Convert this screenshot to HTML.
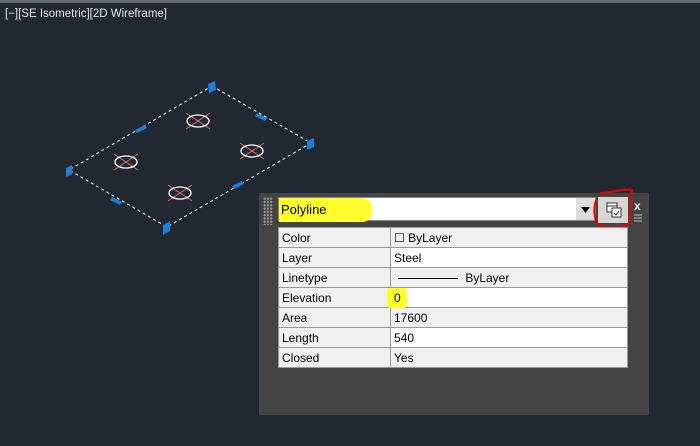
<!DOCTYPE html><html><head><style>
body{margin:0;width:700px;height:446px;background:#222831;overflow:hidden;position:relative;font-family:"Liberation Sans",sans-serif}
.t{position:absolute;left:5px;top:8px;color:#e6e6e6;font-size:11.5px}
.panel{position:absolute;left:259px;top:193px;width:390px;height:222px;background:#444}
.grip{position:absolute;left:263px;top:197px;width:10px;height:28px;background:radial-gradient(circle,#999 1px,transparent 1.3px) 0 0/3.3px 3.3px}
.dd{position:absolute;left:278px;top:197px;width:318px;height:24px;background:#fff;border:1px solid #888;box-sizing:border-box}
.hl{position:absolute;left:279px;top:198px;width:93px;height:24px;background:#ffff2a;border-radius:0 10px 10px 0}
.dd span{position:absolute;left:3px;top:5px;font-size:13px}
.arr{position:absolute;left:576px;top:198px;width:19px;height:22px;background:#ddd}
.btn{position:absolute;left:598px;top:197px;width:30px;height:26px;background:#d8d6d2}
table{position:absolute;left:278px;top:227px;width:350px;border-collapse:collapse;background:#fff;font-size:12px}
tr{height:20px}
td{border:1px solid #999;padding:0 0 0 3px}
td:first-child{width:108px;background:#f0f0f0}
tr:nth-child(odd) td:last-child{background:#f0f0f0}
tr:nth-child(even) td:last-child{background:#fff}
</style></head><body>
<div style="position:absolute;left:0;top:0;width:700px;height:3px;background:#6a6e74"></div>
<div class="t">[−][SE Isometric][2D Wireframe]</div>
<svg width="700" height="446" style="position:absolute;left:0;top:0">
<polygon points="212,86 311,143 167,227 69,170" fill="none" stroke="#fff" stroke-dasharray="3,3" stroke-width="1"/>
<g fill="#1e7fe0">
<polygon points="208,84 215,81 216,90 209,93"/><polygon points="307,141 314,138 314,147 307,150"/>
<polygon points="163,225 170,221 170,231 163,235"/><polygon points="66,168 72,165 72,174 66,177"/>
<polygon points="135,130 145,125 147,128 137,133"/><polygon points="257,113 267,118 265,121 255,116"/>
<polygon points="232,186 242,181 244,184 234,189"/><polygon points="112,197 122,202 120,205 110,200"/>
</g>
<g stroke="#e07070" stroke-width="1">
<path d="M186,113L210,129M186,129L210,113M240,143L264,159M240,159L264,143M114,154L138,170M114,170L138,154M168,185L192,201M168,201L192,185"/></g>
<g fill="none" stroke="#fff" stroke-width="1.3">
<ellipse cx="198" cy="121" rx="11" ry="6"/><ellipse cx="252" cy="151" rx="11" ry="6"/><ellipse cx="126" cy="162" rx="11" ry="6"/><ellipse cx="180" cy="193" rx="11" ry="6"/></g>
</svg>
<div class="panel"></div><div class="grip"></div>
<div class="dd"></div><div class="hl"></div><div class="dd" style="background:none;border:none"><span>Polyline</span></div>
<div class="arr"><svg width="19" height="22"><polygon points="5,9 14,9 9.5,15" fill="#000"/></svg></div>
<div class="btn"><svg width="30" height="26"><rect x="9" y="6" width="10" height="9" fill="#fff" stroke="#333"/><line x1="9" y1="9" x2="19" y2="9" stroke="#333"/><rect x="14" y="11" width="9" height="9" fill="#fff" stroke="#333"/><path d="M16,16l2,2l3,-4" stroke="#333" fill="none"/></svg></div>
<svg width="700" height="446" style="position:absolute;left:0;top:0;pointer-events:none"><path d="M596,200C593,210 594,222 600,226C612,228 622,228 629,224C631,215 630,200 632,190C625,188 612,193 600,193" fill="none" stroke="#e00" stroke-width="2"/>
<text x="634" y="210" fill="#eee" font-size="12" font-weight="bold" font-family="Liberation Sans">x</text>
<path d="M634,215h8M634,218h8M634,221h8" stroke="#bbb"/></svg>
<table>
<tr><td>Color</td><td>☐ ByLayer</td></tr>
<tr><td>Layer</td><td>Steel</td></tr>
<tr><td>Linetype</td><td><span style="display:inline-block;width:60px;border-top:1px solid #000;vertical-align:middle;margin:0 4px"></span> ByLayer</td></tr>
<tr><td>Elevation</td><td style="position:relative"><span style="position:absolute;left:-4px;top:0;width:20px;height:20px;background:#ffff2a;border-radius:3px"></span><span style="position:relative">0</span></td></tr>
<tr><td>Area</td><td>17600</td></tr>
<tr><td>Length</td><td>540</td></tr>
<tr><td>Closed</td><td>Yes</td></tr>
</table>
</body></html>
